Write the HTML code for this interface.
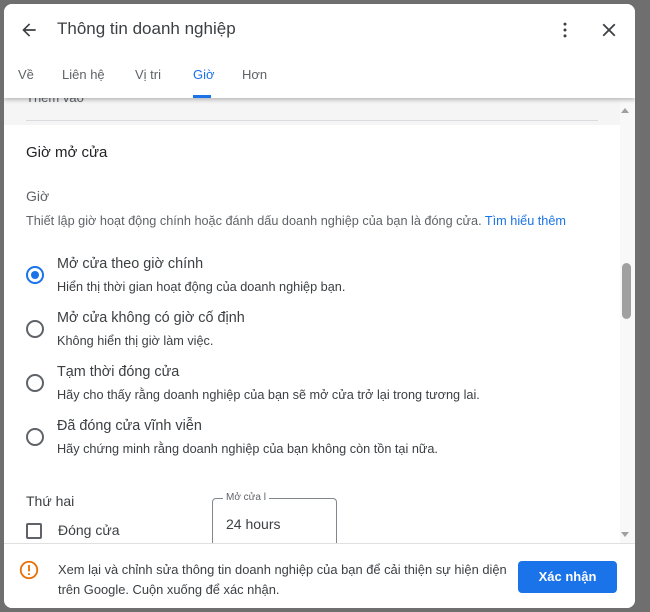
<!DOCTYPE html>
<html><head><meta charset="utf-8"><style>
*{box-sizing:border-box;margin:0;padding:0}
body{width:650px;height:612px;background:#6f6f6f;font-family:"Liberation Sans",sans-serif;position:relative;overflow:hidden;color:#202124}
.dlg{position:absolute;left:4px;top:4px;width:631px;height:604px;background:#fff;border-radius:8px;overflow:hidden}
.abs{position:absolute;white-space:nowrap}
.hdr{position:absolute;left:0;top:0;width:631px;height:94px;background:#fff;box-shadow:0 2px 4px rgba(0,0,0,.25);z-index:2}
.tab{position:absolute;top:63px;font-size:13px;color:#5f6368}
.t1{font-size:14.4px;color:#202124}
.t2{font-size:12.7px;color:#5f6368}
.radio{position:absolute;left:22px;width:18px;height:18px;border:2px solid #5f6368;border-radius:50%}
.foot{position:absolute;left:0;top:539px;width:631px;height:65px;background:#fff;border-top:1px solid #e0e0e0;z-index:2}
</style></head><body>
<div class="dlg">
 <div class="hdr">
  <svg class="abs" style="left:15px;top:16px" width="20" height="20" viewBox="0 0 24 24"><path d="M20 11H7.8l5.6-5.6L12 4l-8 8 8 8 1.4-1.4L7.8 13H20z" fill="#3c4043"/></svg>
  <div class="abs" style="left:53px;top:15px;font-size:17px;color:#3c4043">Thông tin doanh nghiệp</div>
  <svg class="abs" style="left:551px;top:16px" width="20" height="20" viewBox="0 0 24 24"><circle cx="12" cy="5" r="1.8" fill="#3c4043"/><circle cx="12" cy="12" r="1.8" fill="#3c4043"/><circle cx="12" cy="19" r="1.8" fill="#3c4043"/></svg>
  <svg class="abs" style="left:594px;top:15px" width="22" height="22" viewBox="0 0 24 24"><path d="M19 6.4L17.6 5 12 10.6 6.4 5 5 6.4 10.6 12 5 17.6 6.4 19 12 13.4 17.6 19 19 17.6 13.4 12z" fill="#3c4043"/></svg>
  <div class="tab" style="left:14px">Về</div>
  <div class="tab" style="left:58px">Liên hệ</div>
  <div class="tab" style="left:131px">Vị tri</div>
  <div class="tab" style="left:189px;color:#1a73e8">Giờ</div>
  <div class="abs" style="left:189px;top:91px;width:18px;height:3px;background:#1a73e8"></div>
  <div class="tab" style="left:238px">Hơn</div>
 </div>
 <div class="abs" style="left:0;top:94px;width:616px;height:27px;background:#f5f5f5"></div>
 <div class="abs" style="left:22px;top:86px;font-size:13px;color:#5f6368">Thêm vào</div>
 <div class="abs" style="left:22px;top:116px;width:572px;height:1px;background:#dadce0"></div>
 <div class="abs" style="left:616px;top:94px;width:15px;height:445px;background:#f8f8f8"></div>
 <div class="abs" style="left:618px;top:259px;width:9px;height:56px;background:#a0a0a0;border-radius:5px"></div>
 <div class="abs" style="left:617px;top:104px;border:4px solid transparent;border-bottom:5px solid #a0a0a0;border-top:0"></div>
 <div class="abs" style="left:617px;top:528px;border:4px solid transparent;border-top:5px solid #a0a0a0;border-bottom:0"></div>

 <div class="abs t1" style="left:22px;top:140px;font-size:15px">Giờ mở cửa</div>
 <div class="abs t2" style="left:22px;top:184px;font-size:14px">Giờ</div>
 <div class="abs t2" style="left:22px;top:210px">Thiết lập giờ hoạt động chính hoặc đánh dấu doanh nghiệp của bạn là đóng cửa. <span style="color:#1a73e8">Tìm hiểu thêm</span></div>

 <div class="radio" style="top:262px;border-color:#1a73e8"><div style="position:absolute;left:3px;top:3px;width:8px;height:8px;border-radius:50%;background:#1a73e8"></div></div>
 <div class="abs t1" style="left:53px;top:252px;color:#3c4043">Mở cửa theo giờ chính</div>
 <div class="abs t2" style="left:53px;top:276px;color:#3c4043">Hiển thị thời gian hoạt động của doanh nghiệp bạn.</div>
 <div class="radio" style="top:316px"></div>
 <div class="abs t1" style="left:53px;top:306px;color:#3c4043">Mở cửa không có giờ cố định</div>
 <div class="abs t2" style="left:53px;top:330px;color:#3c4043">Không hiển thị giờ làm việc.</div>
 <div class="radio" style="top:370px"></div>
 <div class="abs t1" style="left:53px;top:360px;color:#3c4043">Tạm thời đóng cửa</div>
 <div class="abs t2" style="left:53px;top:384px;color:#3c4043">Hãy cho thấy rằng doanh nghiệp của bạn sẽ mở cửa trở lại trong tương lai.</div>
 <div class="radio" style="top:424px"></div>
 <div class="abs t1" style="left:53px;top:414px;color:#3c4043">Đã đóng cửa vĩnh viễn</div>
 <div class="abs t2" style="left:53px;top:438px;color:#3c4043">Hãy chứng minh rằng doanh nghiệp của bạn không còn tồn tại nữa.</div>

 <div class="abs" style="left:22px;top:489px;font-size:14px;color:#3c4043">Thứ hai</div>
 <div class="abs" style="left:22px;top:519px;width:16px;height:16px;border:2px solid #5f6368;border-radius:2px"></div>
 <div class="abs" style="left:54px;top:518px;font-size:14px;color:#3c4043">Đóng cửa</div>
 <div class="abs" style="left:208px;top:494px;width:125px;height:60px;border:1px solid #80868b;border-radius:4px"></div>
 <div class="abs" style="left:219px;top:488px;font-size:10px;color:#5f6368;background:#fff;padding:0 3px">Mở cửa l</div>
 <div class="abs" style="left:222px;top:512px;font-size:14px;color:#3c4043">24 hours</div>

 <div class="foot">
  <svg class="abs" style="left:14px;top:15px" width="22" height="22" viewBox="0 0 24 24"><circle cx="12" cy="12" r="9" fill="none" stroke="#e8710a" stroke-width="2"/><rect x="11" y="6.5" width="2" height="7" fill="#e8710a"/><rect x="11" y="15.5" width="2" height="2" fill="#e8710a"/></svg>
  <div class="abs" style="left:54px;top:16px;font-size:12.9px;color:#3c4043;line-height:20px">Xem lại và chỉnh sửa thông tin doanh nghiệp của bạn để cải thiện sự hiện diện<br>trên Google. Cuộn xuống để xác nhận.</div>
  <div class="abs" style="left:514px;top:17px;width:99px;height:32px;background:#1a73e8;border-radius:4px;color:#fff;font-size:13px;font-weight:bold;text-align:center;line-height:32px">Xác nhận</div>
 </div>
</div>
</body></html>
